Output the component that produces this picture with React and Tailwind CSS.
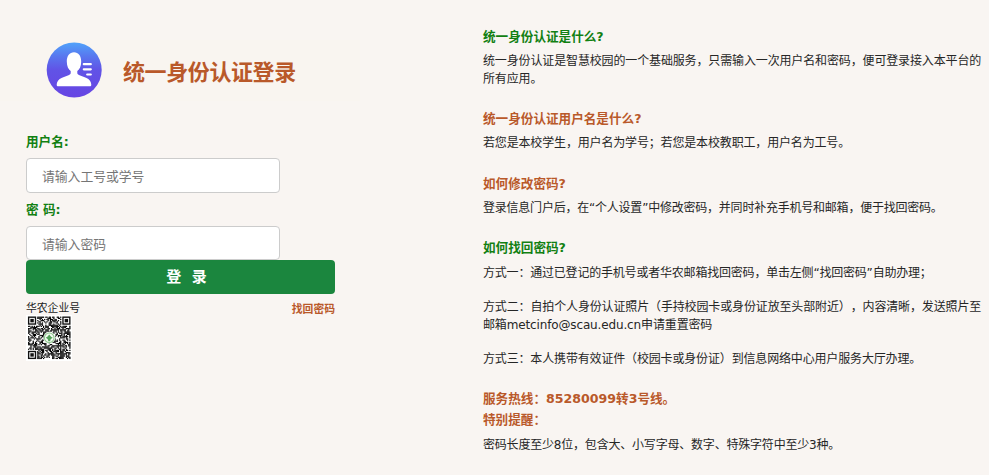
import React from "react";

const QR_SIZE = 37;

function inFinder(x, y) {
  return (x < 8 && y < 8) || (x > QR_SIZE - 9 && y < 8) || (x < 8 && y > QR_SIZE - 9);
}

// Dark modules of the code's data area, from a small linear generator.
function qrModules() {
  const cells = [];
  let seed = 20731;
  for (let y = 0; y < QR_SIZE; y++) {
    for (let x = 0; x < QR_SIZE; x++) {
      seed = (seed * 1103515245 + 12345) % 2147483648;
      const centre = Math.hypot(x - 18, y - 18) < 5;
      if (!inFinder(x, y) && !centre && seed / 2147483648 < 0.56) cells.push([x, y]);
    }
  }
  return cells;
}

const modules = qrModules();

function Finder({ x, y }) {
  return (
    <g>
      <rect x={x + 0.5} y={y + 0.5} width="6" height="6" fill="white" stroke="#111" strokeWidth="1.2" />
      <rect x={x + 2} y={y + 2} width="3" height="3" fill="#111" />
    </g>
  );
}

function QrCode() {
  return (
    <svg viewBox="-1.8 -1.4 40.2 40.2" className="block h-[46px] w-[46px] bg-white">
      {modules.map(([x, y]) => (
        <rect key={`${x}-${y}`} x={x} y={y} width="1.1" height="1.1" fill="#000" />
      ))}
      <Finder x={0} y={0} />
      <Finder x={30} y={0} />
      <Finder x={0} y={30} />
      <circle cx="18.5" cy="18.5" r="5.2" fill="#f4faf3" />
      <circle cx="18.5" cy="18.5" r="4.2" fill="none" stroke="#8cc78c" strokeWidth="0.9" />
      <path d="M18.500 15.600l1.600 2 1.500.8-1.700 1.100-.7 2h-1.400l-.7-2-1.700-1.100 1.500-.8z" fill="#55a35a" />
    </svg>
  );
}

function Logo() {
  return (
    <svg viewBox="0 0 56 56" className="mb-[2px] h-[56px] w-[56px]">
      <defs>
        <linearGradient id="disc" x1="0" y1="0" x2="0" y2="1">
          <stop offset="0" stopColor="#51a3fa" />
          <stop offset="0.25" stopColor="#5877ef" />
          <stop offset="0.5" stopColor="#6153e6" />
          <stop offset="1" stopColor="#6745e3" />
        </linearGradient>
      </defs>
      <circle cx="28.2" cy="28" r="27.5" fill="url(#disc)" />
      <path
        d="M28 10.2c4.4 0 7.2 3.7 7.2 9.2 0 4.700-1.600 7.900-3.900 9.700v2c0 1.100.8 1.500 2.200 2.100l6.500 2.500c3.600 1.400 5.300 4 5.300 7.100 0 1-.6 1.500-1.500 1.500H12.200c-.9 0-1.500-.5-1.500-1.500 0-3.100 1.700-5.700 5.300-7.100l6.500-2.500c1.400-.6 2.200-1 2.200-2.100v-2c-2.300-1.800-3.900-5-3.900-9.700 0-5.500 2.800-9.200 7.200-9.200z"
        fill="white"
      />
      <path d="M37.800 22.200h7M37.800 27.300h7M41.200 32.500h3.600" stroke="white" strokeWidth="2.200" strokeLinecap="round" />
    </svg>
  );
}

function Heading({ className, children }) {
  return (
    <h2 className={`h-[18px] whitespace-nowrap text-[12.6px] leading-[18px] font-bold ${className}`}>{children}</h2>
  );
}

function Line({ className, children }) {
  return (
    <p className={`h-[18px] whitespace-nowrap text-[12px] leading-[18px] text-[#262626] ${className}`}>
      {children}
    </p>
  );
}

export default function App() {
  return (
    <div className="flex h-[475px] w-[989px] overflow-hidden bg-[#f9f5f2] font-['DejaVu_Sans','Noto_Sans_CJK_SC',sans-serif] [text-spacing-trim:space-all]">
      <div className="w-[483px] shrink-0 pt-[40px]">
        <header className="flex h-[61px] w-[360px] items-center bg-[#f9f5f0] pl-[46px]">
          <Logo />
          <h1 className="mb-[2px] ml-[21px] whitespace-nowrap font-['Noto_Sans_CJK_SC',sans-serif] text-[22px] leading-[30px] font-bold tracking-[-0.4px] text-[#b9592a]">
            统一身份认证登录
          </h1>
        </header>
        <form className="ml-[26px] w-[309px] pt-[32px]">
          <label className="block h-[18px] text-[12.6px] leading-[18px] font-bold text-[#128012]">用户名:</label>
          <input
            className="mt-[7px] block h-[35px] w-[254px] rounded border border-[#ccc] bg-white pt-[2px] pr-4 pl-[15px] text-[12.8px] placeholder:text-[#757575]"
            placeholder="请输入工号或学号"
          />
          <label className="mt-[8px] block h-[18px] text-[12.6px] leading-[18px] font-bold text-[#128012]">密 码:</label>
          <input
            type="text"
            className="mt-[7px] block h-[34px] w-[254px] rounded border border-[#ccc] bg-white pt-[2px] pr-4 pl-[15px] text-[12.8px] placeholder:text-[#757575]"
            placeholder="请输入密码"
          />
          <button
            type="button"
            className="block h-[34px] w-[309px] rounded bg-[#1b863e] pl-[12px] text-center text-[15px] leading-[34px] font-bold whitespace-pre text-white"
          >
            登  录
          </button>
          <div className="flex h-[21px] justify-between pt-[6px] text-[10.8px] leading-[18px]">
            <span className="text-[#222]">华农企业号</span>
            <a className="pt-px font-bold text-[#b9592a]">找回密码</a>
          </div>
        </form>
        <div className="ml-[26px]">
          <QrCode />
        </div>
      </div>
      <div className="w-[506px] pt-[28px]">
        <Heading className="text-[#128012]">统一身份认证是什么?</Heading>
        <Line className="mt-[6px] tracking-[-0.14px]">
          统一身份认证是智慧校园的一个基础服务，只需输入一次用户名和密码，便可登录接入本平台的
        </Line>
        <Line className="tracking-[-0.14px]">所有应用。</Line>
        <Heading className="mt-[22px] text-[#b9592a]">统一身份认证用户名是什么?</Heading>
        <Line className="mt-[6px] tracking-[-0.16px]">若您是本校学生，用户名为学号；若您是本校教职工，用户名为工号。</Line>
        <Heading className="mt-[23px] text-[#b9592a]">如何修改密码?</Heading>
        <Line className="mt-[6px] tracking-[-0.22px]">登录信息门户后，在“个人设置”中修改密码，并同时补充手机号和邮箱，便于找回密码。</Line>
        <Heading className="mt-[22px] text-[#128012]">如何找回密码?</Heading>
        <Line className="mt-[7px] tracking-[-0.2px]">方式一：通过已登记的手机号或者华农邮箱找回密码，单击左侧“找回密码”自助办理；</Line>
        <Line className="mt-[16px] tracking-[-0.14px]">
          方式二：自拍个人身份认证照片（手持校园卡或身份证放至头部附近），内容清晰，发送照片至
        </Line>
        <Line className="tracking-[-0.14px]">邮箱metcinfo@scau.edu.cn申请重置密码</Line>
        <Line className="mt-[16px] tracking-[-0.16px]">
          方式三：本人携带有效证件（校园卡或身份证）到信息网络中心用户服务大厅办理。
        </Line>
        <Heading className="mt-[22px] text-[#b9592a]">服务热线：85280099转3号线。</Heading>
        <Heading className="mt-[3px] text-[#b9592a]">特别提醒：</Heading>
        <Line className="mt-[7px] tracking-[-0.2px]">密码长度至少8位，包含大、小写字母、数字、特殊字符中至少3种。</Line>
      </div>
    </div>
  );
}
